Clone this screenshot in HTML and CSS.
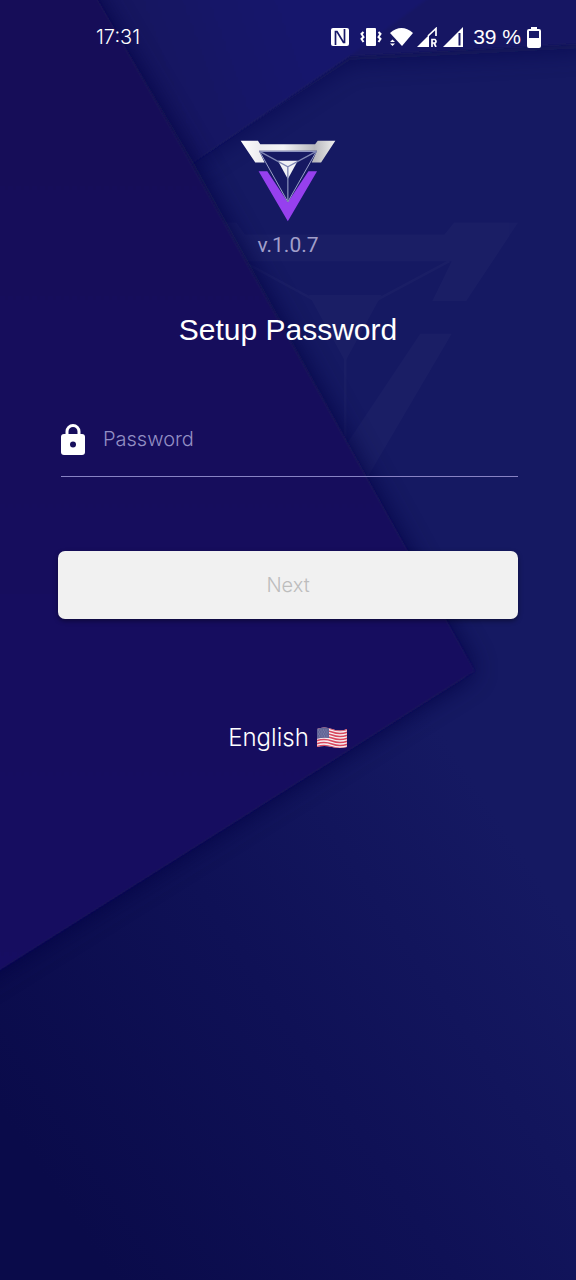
FILE: index.html
```html
<!DOCTYPE html>
<html lang="en">
<head>
<meta charset="utf-8">
<meta name="viewport" content="width=device-width, initial-scale=1">
<title>Setup Password</title>
<link rel="stylesheet" href="styles.css">
</head>
<body>
<svg class="backdrop" viewBox="0 0 576 1280" preserveAspectRatio="none" aria-hidden="true">
  <defs>
    <linearGradient id="base" gradientUnits="userSpaceOnUse" x1="60" y1="1200" x2="540" y2="880">
      <stop offset="0" stop-color="#0a0b4a"/><stop offset=".5" stop-color="#0f1156"/><stop offset="1" stop-color="#151962"/>
    </linearGradient>
    <linearGradient id="panel" x1="0" y1="0" x2="0" y2="1">
      <stop offset="0" stop-color="#170f58"/><stop offset=".45" stop-color="#160f5c"/><stop offset="1" stop-color="#140c62"/>
    </linearGradient>
    <linearGradient id="fold" gradientUnits="userSpaceOnUse" x1="150" y1="80" x2="290" y2="30">
      <stop offset="0" stop-color="#151660"/><stop offset="1" stop-color="#19186c"/>
    </linearGradient>
    <filter id="soft" x="-20%" y="-20%" width="140%" height="140%"><feGaussianBlur stdDeviation="13"/></filter>
    <filter id="hairline" x="-5%" y="-5%" width="110%" height="110%"><feGaussianBlur stdDeviation="1"/></filter>
  </defs>
  <rect width="576" height="1280" fill="url(#base)"/>
  <g fill="#fff" opacity=".02" transform="translate(171 220) scale(1.21)">
    <path d="M2 2H54L61 12H226L234 2H287L244 67H216L232 34H59L74 67H46Z"/>
    <path d="M56 94H82L144 187L206 94H232L144 244Z"/>
    <path d="M114 62H174L144 117Z"/>
    <path d="M59 34L144 80L230 34M144 80V186" fill="none" stroke="#fff" stroke-width="2"/>
  </g>
  <path d="M190 165L350 60L586 48V-30H90Z" fill="#0b0e48" opacity=".6" filter="url(#soft)"/>
  <g filter="url(#hairline)">
    <path d="M90 -6H586V43L350 56L190 165Z" fill="url(#fold)"/>
    <path d="M434 -6H586V43L350 56Z" fill="#151861" opacity=".65"/>
  </g>
  <path d="M-40 -40H76L98 0L195 165L475 672L-40 995Z" fill="#0a0e42" opacity=".85" filter="url(#soft)"/>
  <path d="M-6 -6H95L98 0L193 167L475 671L-6 974Z" fill="url(#panel)" filter="url(#hairline)"/>
</svg>

<header class="status">
  <time class="clock">17:31</time>
  <div class="indicators">
    <svg class="nfc" width="20" height="20" viewBox="0 0 20 20" aria-hidden="true"><rect x="1" y="1" width="18" height="18" rx="2" fill="#fff"/><path d="M5.500 18V4.500H7L13.500 15.500H14.500V2" fill="none" stroke="#181968" stroke-width="1.700"/></svg>
    <svg class="vibrate" width="22" height="20" viewBox="0 0 22 20" aria-hidden="true"><rect x="6" y="1" width="10" height="18" rx="1" fill="#fff"/><path d="M3.500 5L1.500 7L3.500 10L1.500 12L3.500 15M18.500 5L20.500 7L18.500 10L20.500 12L18.500 15" fill="none" stroke="#fff" stroke-width="2"/></svg>
    <svg class="wifi" width="23" height="20" viewBox="0 0 23 20" aria-hidden="true"><path d="M0 6Q11.500-4 23 6L12 19Z" fill="#fff"/><path d="M0 15L2.500 12.500L5 15ZM0 16.500L2.500 19L5 16.500Z" fill="#fff"/></svg>
    <svg class="signal" width="20" height="20" viewBox="0 0 20 20" aria-hidden="true"><path d="M0 20L12 8V20Z" fill="#fff"/><path d="M11 9L19 1.500V9M15 20V12.500H18Q20 14.500 18 16H15M17 16L19 20" fill="none" stroke="#fff" stroke-width="1.700"/></svg>
    <svg class="signal" width="20" height="20" viewBox="0 0 20 20" aria-hidden="true"><path d="M0 20L20 0V20Z" fill="#fff"/><path d="M16.500 6V18.500" stroke="#181968" stroke-width="2"/></svg>
    <span class="charge">39 %</span>
    <svg class="battery" width="14" height="21" viewBox="0 0 14 21" aria-hidden="true"><path d="M4 0H10V2H12Q14 2 14 4V19Q14 21 12 21H2Q0 21 0 19V4Q0 2 2 2H4Z" fill="#fff"/><path d="M2 4H12V11H2Z" fill="#181968"/></svg>
  </div>
</header>

<main class="screen">
  <svg class="logo" viewBox="0 0 289 246" role="img" aria-label="Logo">
    <defs><linearGradient id="metal"><stop offset="0" stop-color="#fff"/><stop offset=".2" stop-color="#ececf0"/><stop offset=".45" stop-color="#f4f4f6"/><stop offset=".78" stop-color="#b8b8bd"/><stop offset="1" stop-color="#eee"/></linearGradient></defs>
    <path d="M2 2H54L61 12H226L234 2H287L244 67H216L232 32H57L74 67H46Z" fill="url(#metal)"/>
    <path d="M56 94H82L144 187L206 94H232L144 244Z" fill="#9640ee"/>
    <path d="M59 34H230L144 186Z" fill="#161962" stroke="#9aa0c8" stroke-width="3"/>
    <path d="M114 62H174L144 117Z" fill="#f0f0f5"/>
    <path d="M59 34L144 80L230 34M144 80V186" fill="none" stroke="#7f86b4" stroke-width="4"/>
  </svg>
  <p class="version">v.1.0.7</p>
  <h1 class="title">Setup Password</h1>
  <form class="form">
    <div class="field">
      <label class="field-label" for="password" aria-label="Password">
        <svg width="24" height="31" viewBox="0 0 24 31" aria-hidden="true"><path d="M6 12V7.500A6 6 0 0 1 18 7.500V12" fill="none" stroke="#fff" stroke-width="3"/><rect y="10" width="24" height="21" rx="3" fill="#fff"/><circle cx="12" cy="20.500" r="3" fill="#160f5c"/></svg>
      </label>
      <input class="input" id="password" type="password" placeholder="Password">
    </div>
    <button class="next" type="submit" disabled>Next</button>
  </form>
  <button class="language" type="button">
    <span>English</span>
    <svg class="flag" width="32" height="22" viewBox="0 0 32 22" aria-hidden="true">
      <defs><clipPath id="wave"><path d="M1 2Q8-1 16 2T31 2V20Q24 22 16 20T1 20Z"/></clipPath></defs>
      <g clip-path="url(#wave)">
        <rect width="32" height="22" fill="#f5eef2"/>
        <path d="M0 2Q8-1 16 2T32 2M0 5Q8 2 16 5T32 5M0 8Q8 5 16 8T32 8M0 11Q8 8 16 11T32 11M0 14Q8 11 16 14T32 14M0 17Q8 14 16 17T32 17M0 20Q8 17 16 20T32 20" fill="none" stroke="#d9485f" stroke-width="1.500"/>
        <path d="M0 0H13V11Q7 10 0 12Z" fill="#626596"/>
        <path d="M2 3H12M3 5H12M2 7H12M3 9H12" stroke="#8488b0" stroke-width="1" stroke-dasharray="1 1.500"/>
      </g>
    </svg>
  </button>
</main>
</body>
</html>
```
FILE: styles.css
```css
* {
  box-sizing: border-box;
}

body {
  margin: 0;
  min-height: 100vh;
  background: #0e1055;
  color: #fff;
  font-family: Inter, "Liberation Sans", sans-serif;
  font-weight: 300;
}

.backdrop {
  position: absolute;
  inset: 0;
  z-index: -1;
  width: 100%;
  height: 100%;
}

.status {
  display: flex;
  justify-content: space-between;
  align-items: center;
  height: 74px;
  padding: 0 35px 0 96px;
}

.clock {
  font-size: 20px;
}

.indicators {
  display: flex;
  align-items: center;
}

.nfc {
  margin-right: 10px;
}

.vibrate {
  margin-right: 8px;
}

.wifi {
  margin-right: 4px;
}

.signal {
  margin-right: 6px;
}

.charge {
  margin: 0 6px 0 4px;
  font-family: "Liberation Sans", Arial, sans-serif;
  font-size: 21px;
}

.screen {
  display: flex;
  flex-direction: column;
  align-items: center;
  padding: 66px 58px 0;
}

.logo {
  width: 96px;
  height: 82px;
}

.version {
  margin: 11px 0 0;
  color: #a19fca;
  font-family: Roboto, sans-serif;
  font-size: 21px;
  line-height: 24px;
  font-weight: 400;
}

.title {
  margin: 55px 0 0;
  font-family: "Liberation Sans", Arial, sans-serif;
  font-size: 30px;
  line-height: 36px;
  font-weight: 400;
}

.form {
  width: 100%;
  margin-top: 54px;
}

.field {
  display: flex;
  align-items: center;
  gap: 18px;
  height: 75px;
  margin-left: 3px;
  border-bottom: 1px solid #8782c4;
}

.field-label {
  display: flex;
}

.input {
  flex: 1;
  min-width: 0;
  padding: 0;
  border: 0;
  outline: 0;
  background: none;
  color: #fff;
  font: inherit;
  font-size: 20px;
}

.input::placeholder {
  color: #938fc4;
  opacity: 1;
}

.next {
  display: block;
  width: 100%;
  height: 68px;
  margin-top: 74px;
  border: 0;
  border-radius: 7px;
  background: #f1f1f1;
  box-shadow: 0 2px 5px rgb(0 0 0 / 40%);
  color: #bdbdbd;
  font: inherit;
  font-size: 20px;
}

.language {
  display: flex;
  align-items: center;
  gap: 7px;
  margin-top: 103px;
  padding: 0;
  border: 0;
  background: none;
  color: #fff;
  font: inherit;
  font-size: 24px;
  line-height: 32px;
}
```
